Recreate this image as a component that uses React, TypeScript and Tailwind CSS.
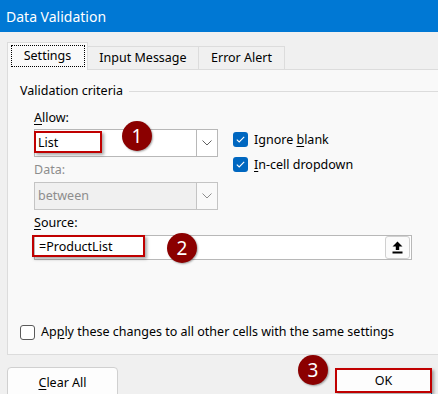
import React from 'react';

const font = "font-['Segoe_UI','Noto_Sans',sans-serif]";

function Chevron({ color = '#606060' }: { color?: string }) {
  return (
    <svg width="10" height="6" viewBox="0 0 10 6" fill="none">
      <path d="M0.5 0.5 L5 5 L9.5 0.5" stroke={color} strokeWidth="1" />
    </svg>
  );
}

function Checked() {
  return (
    <span className="flex h-[15px] w-[15px] items-center justify-center rounded-[3px] bg-[#0067c0]">
      <svg width="9" height="7" viewBox="0 0 9 7" fill="none">
        <path d="M0.8 3.6 L3.2 5.9 L8.2 0.8" stroke="white" strokeWidth="1.1" />
      </svg>
    </span>
  );
}

function Marker({ n, className }: { n: number; className: string }) {
  return (
    <span
      className={`absolute flex h-[30px] w-[30px] items-center justify-center rounded-full bg-[#8b0000] text-[19px] text-white shadow-[1px_1px_2px_rgba(0,0,0,0.35)] ${className}`}
    >
      {n}
    </span>
  );
}

function RedBox({ className }: { className: string }) {
  return (
    <span
      className={`pointer-events-none absolute border-2 border-[#c00000] shadow-[2px_2px_3px_rgba(0,0,0,0.35)] ${className}`}
    />
  );
}

export default function App() {
  return (
    <div className={`relative h-[394px] w-[438px] overflow-hidden bg-[#f0f0f0] text-[12.5px] text-black ${font}`}>
      {/* Title bar */}
      <div className="flex h-8 items-center bg-[#0078d4] pl-[6px] text-[14px] text-white">
        Data Validation
      </div>

      <div className="pl-[7px] pt-[10px]">
        {/* Tabs */}
        <div className="relative z-10 flex h-[28px] items-end">
          <div className="flex h-[28px] w-[81px] items-center justify-center border border-b-0 border-[#dcdcdc] bg-[#f9f9f9] pb-[1px]">
            <span className="flex h-[22px] w-[74px] items-center justify-center border border-dotted border-black">
              Settings
            </span>
          </div>
          <div className="flex h-[24px] w-[111px] items-center justify-center border-t border-r border-[#dcdcdc]">
            Input Message
          </div>
          <div className="flex h-[24px] w-[86px] items-center justify-center border-t border-r border-[#dcdcdc]">
            Error Alert
          </div>
        </div>

        {/* Panel */}
        <div className="-mt-px h-[286px] border border-r-0 border-[#dcdcdc] bg-[#f9f9f9]">
          <div className="mt-[13px] flex items-center pl-[12px]">
            <span className="leading-4">Validation criteria</span>
            <span className="ml-[6px] h-px flex-1 bg-[#dcdcdc]" />
          </div>

          <div className="pl-[26px]">
            <div className="mt-[11px] leading-4">
              <span className="underline underline-offset-2">A</span>llow:
            </div>
            <div className="mt-[3px] flex h-[28px] items-start">
              <div className="flex h-[28px] w-[184px] border border-[#b8b8b8] bg-white">
                <span className="flex flex-1 items-center pl-[3px]">List</span>
                <span className="flex w-[21px] items-center justify-center border-l border-[#b8b8b8]">
                  <Chevron />
                </span>
              </div>
              <div className="ml-[15px] mt-[3px] flex flex-col gap-[10px]">
                <label className="flex items-center gap-[6px] leading-[15px]">
                  <Checked />
                  <span>
                    Ignore <span className="underline underline-offset-2">b</span>lank
                  </span>
                </label>
                <label className="flex items-center gap-[6px] leading-[15px]">
                  <Checked />
                  <span>
                    <span className="underline underline-offset-2">I</span>n-cell dropdown
                  </span>
                </label>
              </div>
            </div>

            <div className="mt-[5px] leading-4 text-[#8d8d8d]">Data:</div>
            <div className="mt-[4px] flex h-[28px] w-[184px] border border-[#c4c4c4] bg-[#f0f0f0] text-[#8d8d8d]">
              <span className="flex flex-1 items-center pl-[3px]">between</span>
              <span className="flex w-[21px] items-center justify-center border-l border-[#c4c4c4] bg-[#f9f9f9]">
                <Chevron color="#8d8d8d" />
              </span>
            </div>

            <div className="mt-[5px] leading-4">
              <span className="underline underline-offset-2">S</span>ource:
            </div>
            <div className="mt-[4px] flex h-[25px] w-[378px] items-center border border-[#b8b8b8] bg-white pl-[4px]">
              <span className="flex-1">=ProductList</span>
              <span className="mr-px flex h-[23px] w-[25px] items-center justify-center rounded-[3px] border border-[#d0d0d0] bg-[#fbfbfb]">
                <svg width="11" height="13" viewBox="0 0 11 13">
                  <path d="M5.5 0.5 L10.5 5.5 L7.2 5.5 L7.2 9 L3.8 9 L3.8 5.5 L0.5 5.5 Z" fill="black" />
                  <rect x="0.5" y="10.5" width="10" height="2" fill="black" />
                </svg>
              </span>
            </div>
          </div>

          <label className="mt-[64px] flex items-center gap-[6px] pl-[12px] leading-4">
            <span className="h-[15px] w-[15px] rounded-[3px] border border-[#5a5a5a] bg-white" />
            <span>
              Ap<span className="underline underline-offset-2">p</span>ly these changes to all other cells with the same settings
            </span>
          </label>
        </div>

        {/* Buttons */}
        <div className="mt-[12px] flex">
          <div className="flex h-[34px] w-[111px] items-start justify-center rounded-[4px] border border-[#d0d0d0] bg-[#fdfdfd] pt-[6px]">
            <span>
              <span className="underline underline-offset-2">C</span>lear All
            </span>
          </div>
          <div className="ml-auto mr-[6px] mt-[1px] flex h-[26px] w-[96px] items-center justify-center border-t border-r border-[#0067c0] bg-[#fdfdfd]">
            OK
          </div>
        </div>
      </div>

      {/* Annotations */}
      <RedBox className="left-[34px] top-[131px] h-[22px] w-[68px]" />
      <Marker n={1} className="left-[122px] top-[121px]" />
      <RedBox className="left-[32px] top-[235px] h-[22px] w-[113px]" />
      <Marker n={2} className="left-[167px] top-[233px]" />
      <Marker n={3} className="left-[298px] top-[355px]" />
      <RedBox className="left-[335px] top-[368px] h-[25px] w-[97px]" />
    </div>
  );
}
